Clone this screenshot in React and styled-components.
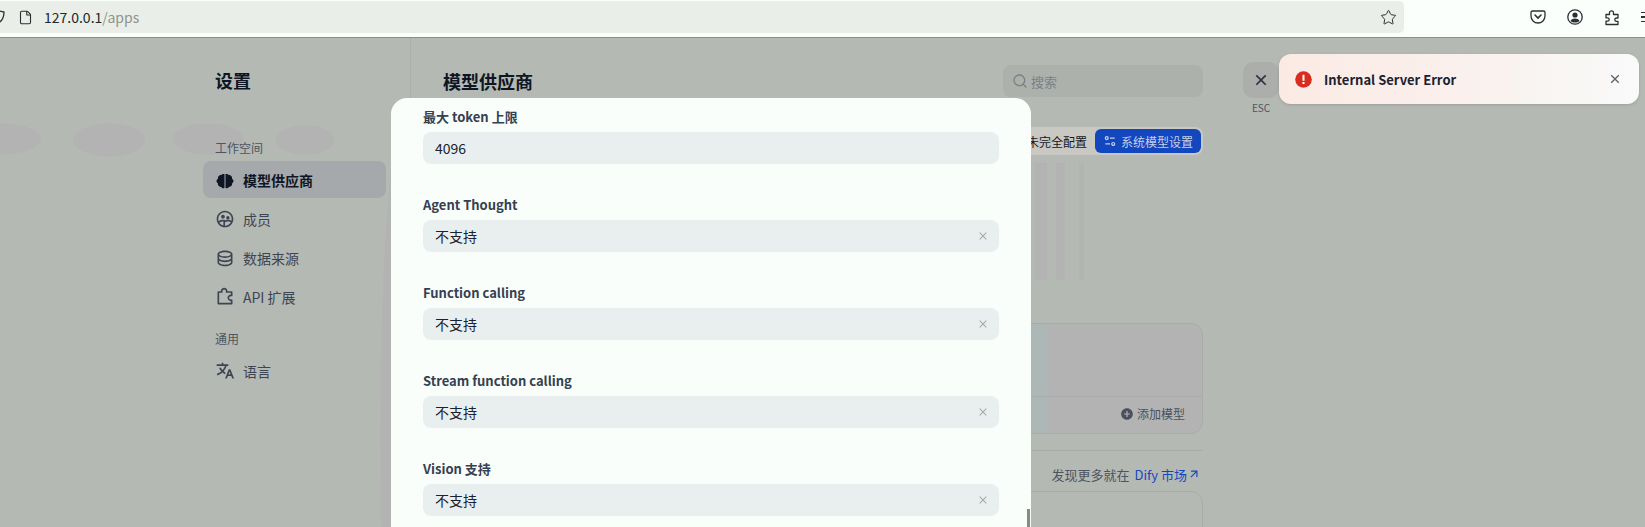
import React from "react"
import styled, { createGlobalStyle } from "styled-components"
import {
  RiAddCircleFill,
  RiArrowRightUpLine,
  RiCloseLine,
  RiDatabase2Line,
  RiEqualizer2Line,
  RiGroup2Line,
  RiPuzzle2Line,
  RiSearchLine,
  RiTranslate2,
} from "react-icons/ri"
import { File, Star } from "lucide-react"

const GlobalStyle = createGlobalStyle`
  html, body {
    margin: 0;
    padding: 0;
    overflow: hidden;
    background: #b5b9b4;
  }
  * {
    box-sizing: border-box;
  }
  body {
    font-family: "Noto Sans CJK SC", "Noto Sans", sans-serif;
  }
`

const BrainIcon = () => (
  <svg width="20" height="20" viewBox="0 0 20 20" fill="currentColor">
    <path d="M9.500 2v16c-1.300.4-2.700-.1-3.400-1.100-.8.1-1.900-.3-2.500-1.100-.7-.8-.8-1.700-.6-2.400-.9-.6-1.500-1.400-1.500-2.400s.6-1.800 1.500-2.300c-.2-.9-.1-1.800.6-2.500.6-.8 1.600-1.200 2.500-1.100.7-1 2.100-1.500 3.400-1Z" />
    <path d="M10.500 2v16c1.300.4 2.700-.1 3.400-1.100.8.1 1.900-.3 2.500-1.100.7-.8.8-1.700.6-2.400.9-.6 1.500-1.400 1.500-2.400s-.6-1.800-1.500-2.300c.2-.9.1-1.800-.6-2.500-.6-.8-1.600-1.200-2.500-1.100-.7-1-2.100-1.500-3.400-1Z" />
  </svg>
)

const navItems = [
  { label: "模型供应商", Icon: BrainIcon, active: true },
  { label: "成员", Icon: RiGroup2Line },
  { label: "数据来源", Icon: RiDatabase2Line },
  { label: "API 扩展", Icon: RiPuzzle2Line },
]

const fields = [
  { label: "Agent Thought" },
  { label: "Function calling" },
  { label: "Stream function calling" },
  { label: "Vision 支持" },
]

const App = () => {
  return (
    <Page>
      <GlobalStyle />
      <BrowserBar>
        <UrlBar>
          <Shield viewBox="0 0 16 16">
            <path d="M1 3 L8 1.500 L15 3 C15 9 12 13 8 14.500 C4 13 1 9 1 3Z" />
          </Shield>
          <File size={15} strokeWidth={1.8} color="#2c3033" />
          <UrlText>
            127.0.0.1<UrlPath>/apps</UrlPath>
          </UrlText>
          <UrlSpacer />
          <Star size={17} strokeWidth={1.4} color="#2c3033" />
        </UrlBar>
        <BrowserTools>
          <svg width="16" height="16" viewBox="0 0 16 16" fill="none" stroke="#2c3033" strokeWidth="1.3">
            <path d="M2.500 2h11A1.500 1.500 0 0 1 15 3.500V7a7 7 0 0 1-14 0V3.500A1.500 1.500 0 0 1 2.500 2Z" />
            <path d="M5 6l3 3 3-3" strokeWidth="1.600" strokeLinecap="round" />
          </svg>
          <svg width="16" height="16" viewBox="0 0 16 16" fill="#2c3033">
            <circle cx="8" cy="8" r="7.200" fill="none" stroke="#2c3033" strokeWidth="1.300" />
            <circle cx="8" cy="6" r="2.600" />
            <path d="M3.500 12c1-2 2.600-2.600 4.500-2.600s3.500.6 4.500 2.600c-1.200 1-2.800 1.600-4.500 1.600s-3.300-.6-4.500-1.600Z" />
          </svg>
          <svg width="16" height="17" viewBox="0 0 16 16" fill="none" stroke="#2c3033" strokeWidth="1.300" strokeLinejoin="round">
            <path d="M2 5h3.500V3.300a2 2 0 0 1 4 0V5H14v3.500h-1.500a1.700 1.700 0 0 0 0 3.400H14V15H2v-3.300h1.500a1.700 1.700 0 0 0 0-3.400H2z" />
          </svg>
          <Burger>
            <span />
            <span />
            <span />
          </Burger>
        </BrowserTools>
      </BrowserBar>

      <Main>
        <Sidebar>
          <SideTitle>设置</SideTitle>
          <GroupLabel>工作空间</GroupLabel>
          <NavList>
            {navItems.map(({ label, Icon, active }) => (
              <NavItem key={label} $active={active}>
                <Icon size={20} />
                {label}
              </NavItem>
            ))}
          </NavList>
          <GroupLabel $second>通用</GroupLabel>
          <NavItem>
            <RiTranslate2 size={20} />
            语言
          </NavItem>
        </Sidebar>

        <Content>
          <HeaderRow>
            <Heading>模型供应商</Heading>
            <Search>
              <RiSearchLine size={16} />
              搜索
            </Search>
          </HeaderRow>
          <ToolRow>
            <ToolWrap>
              未完全配置
              <BlueButton>
                <RiEqualizer2Line size={14} />
                系统模型设置
              </BlueButton>
            </ToolWrap>
          </ToolRow>
          <StripeArea />
          <ProviderCard>
            <CardBody />
            <CardFoot>
              <AddModel>
                <RiAddCircleFill size={14} />
                添加模型
              </AddModel>
            </CardFoot>
          </ProviderCard>
          <Rule />
          <MarketRow>
            发现更多就在
            <MarketLink>
              Dify 市场
              <RiArrowRightUpLine size={14} />
            </MarketLink>
          </MarketRow>
          <NextCard />
        </Content>

        <CloseColumn>
          <CloseButton>
            <RiCloseLine size={20} />
          </CloseButton>
          <EscText>ESC</EscText>
        </CloseColumn>
      </Main>

      <Modal>
        <Field>
          <FieldLabel>最大 token 上限</FieldLabel>
          <InputBox>4096</InputBox>
        </Field>
        {fields.map(field => (
          <Field key={field.label}>
            <FieldLabel>{field.label}</FieldLabel>
            <InputBox>
              不支持
              <ClearIcon>
                <RiCloseLine size={14} />
              </ClearIcon>
            </InputBox>
          </Field>
        ))}
        <ScrollThumb />
      </Modal>

      <Toast>
        <ToastIcon viewBox="0 0 17 17">
          <circle cx="8.500" cy="8.500" r="8.300" fill="#d92d20" />
          <rect x="7.500" y="3.800" width="2" height="6" fill="#fff" />
          <rect x="7.500" y="11" width="2" height="2" fill="#fff" />
        </ToastIcon>
        <ToastText>Internal Server Error</ToastText>
        <ToastClose>
          <RiCloseLine size={16} />
        </ToastClose>
      </Toast>
    </Page>
  )
}

const Page = styled.div`
  position: relative;
  display: flex;
  flex-direction: column;
  width: 1645px;
  height: 527px;
  overflow: hidden;
  background: #b5b9b4;
`

const BrowserBar = styled.div`
  display: flex;
  align-items: flex-start;
  flex-shrink: 0;
  height: 38px;
  padding-top: 1px;
  background: #fbfffb;
  border-bottom: 1px solid #8b8f8b;
`

const Shield = styled.svg`
  width: 16px;
  height: 16px;
  margin-left: -11px;
  margin-right: 13px;
  flex-shrink: 0;
  fill: none;
  stroke: #2c3033;
  stroke-width: 1.3;
`

const UrlBar = styled.div`
  display: flex;
  align-items: center;
  flex-shrink: 0;
  width: 1404px;
  height: 32px;
  padding-right: 7px;
  background: #e9efe8;
  border-radius: 0 5px 5px 0;
`

const UrlText = styled.span`
  margin-left: 11px;
  font-size: 14px;
  color: #23272a;
`

const UrlPath = styled.span`
  color: #8f9490;
`

const UrlSpacer = styled.div`
  flex: 1;
`

const BrowserTools = styled.div`
  display: flex;
  align-items: center;
  flex-shrink: 0;
  gap: 21px;
  height: 32px;
  margin-left: 126px;
`

const Burger = styled.div`
  display: flex;
  flex-direction: column;
  gap: 3px;
  width: 16px;
  flex-shrink: 0;

  span {
    height: 1.5px;
    background: #2c3033;
  }
`

const Main = styled.div`
  display: flex;
  flex: 1;
  min-height: 0;
  background-color: #b5b9b4;
  background-image:
    radial-gradient(ellipse 42px 16px at 0px 101px, #b4b3b3 96%, transparent),
    radial-gradient(ellipse 37px 17px at 109px 102px, #b4b3b3 96%, transparent),
    radial-gradient(ellipse 36px 16px at 208px 101px, #b4b3b3 96%, transparent),
    radial-gradient(ellipse 30px 15px at 305px 102px, #b4b3b3 96%, transparent),
    radial-gradient(ellipse 22px 320px at 402px 400px, #b4b3b3 96%, transparent);
  background-position: 0 0;
  background-repeat: no-repeat;
`

const Sidebar = styled.aside`
  width: 411px;
  flex-shrink: 0;
  padding: 28px 24px 0 203px;
  border-right: 1px solid #abafaa;
`

const SideTitle = styled.div`
  padding-left: 12px;
  font-size: 18px;
  line-height: 28px;
  font-weight: 700;
  color: #0f1623;
`

const GroupLabel = styled.div`
  margin-top: ${props => (props.$second ? "15px" : "45px")};
  margin-bottom: 4px;
  padding-left: 12px;
  font-size: 12px;
  line-height: 18px;
  color: #4d5562;
`

const NavList = styled.div`
  display: flex;
  flex-direction: column;
  gap: 2px;
`

const NavItem = styled.div`
  display: flex;
  align-items: center;
  gap: 8px;
  height: 37px;
  padding-left: 12px;
  border-radius: 8px;
  font-size: 14px;
  font-weight: ${props => (props.$active ? 700 : 400)};
  color: ${props => (props.$active ? "#0f1623" : "#3e4552")};
  background: ${props => (props.$active ? "#a6a9ac" : "transparent")};
`

const Content = styled.section`
  width: 792px;
  flex-shrink: 0;
  padding: 27px 0 0 32px;
`

const HeaderRow = styled.div`
  display: flex;
  align-items: center;
  justify-content: space-between;
  height: 32px;
`

const Heading = styled.h1`
  margin: 0;
  font-size: 18px;
  line-height: 28px;
  font-weight: 700;
  color: #0f1623;
`

const Search = styled.div`
  display: flex;
  align-items: center;
  gap: 3px;
  width: 200px;
  height: 32px;
  padding-left: 9px;
  border-radius: 8px;
  background: #adb1ac;
  font-size: 13px;
  color: #7b8087;
`

const ToolRow = styled.div`
  display: flex;
  justify-content: flex-end;
  margin-top: 30px;
`

const ToolWrap = styled.div`
  display: flex;
  align-items: center;
  justify-content: flex-end;
  gap: 8px;
  width: 240px;
  height: 28px;
  padding: 0 2px 0 0;
  border-radius: 8px;
  background: #c9c8c2;
  font-size: 12px;
  color: #14181f;
`

const BlueButton = styled.div`
  display: flex;
  align-items: center;
  gap: 4px;
  width: 106px;
  height: 24px;
  padding-left: 8px;
  border-radius: 6px;
  background: #1347c0;
  font-size: 12px;
  color: #c5d0e8;
`

const StripeArea = styled.div`
  height: 117px;
  margin-top: 8px;
  background-image:
    linear-gradient(#b4b3b3, #b4b3b3),
    linear-gradient(#b4b3b3, #b4b3b3),
    linear-gradient(#b4b3b3, #b4b3b3);
  background-size: 12px 100%, 9px 100%, 5px 100%;
  background-position: 592px 0, 613px 0, 636px 0;
  background-repeat: no-repeat;
`

const ProviderCard = styled.div`
  display: flex;
  flex-direction: column;
  height: 111px;
  margin-top: 43px;
  border: 1px solid #a9acaa;
  border-radius: 12px;
  background: linear-gradient(90deg, #b4b3b3 587px, #adb7b5 587px, #adb7b5 603px, #b4b3b3 603px);
`

const CardBody = styled.div`
  flex: 1;
`

const CardFoot = styled.div`
  display: flex;
  align-items: center;
  justify-content: flex-end;
  height: 37px;
  padding: 0 17px 3px 0;
  border-top: 1px solid #a9acaa;
`

const AddModel = styled.div`
  display: flex;
  align-items: center;
  gap: 3px;
  font-size: 12px;
  color: #4a515d;
`

const Rule = styled.div`
  height: 1px;
  margin-top: 16px;
  background: #a9acaa;
`

const MarketRow = styled.div`
  display: flex;
  align-items: center;
  justify-content: flex-end;
  gap: 5px;
  height: 20px;
  margin-top: 13px;
  padding-right: 2px;
  font-size: 13px;
  color: #4d5562;
`

const MarketLink = styled.span`
  display: flex;
  align-items: center;
  color: #1347c0;
`

const NextCard = styled.div`
  height: 60px;
  margin-top: 7px;
  border: 1px solid #a9acaa;
  border-radius: 12px;
`

const CloseColumn = styled.div`
  display: flex;
  flex-direction: column;
  align-items: center;
  margin: 24px 0 0 40px;
`

const CloseButton = styled.div`
  display: flex;
  align-items: center;
  justify-content: center;
  width: 36px;
  height: 36px;
  border-radius: 10px;
  background: #abaeaa;
  color: #2c3442;
`

const EscText = styled.div`
  margin-top: 2px;
  font-size: 10px;
  line-height: 16px;
  color: #4d5562;
`

const Modal = styled.div`
  position: absolute;
  left: 391px;
  top: 98px;
  display: flex;
  flex-direction: column;
  gap: 31px;
  width: 640px;
  height: 460px;
  padding: 9px 32px 0;
  border-radius: 16px;
  background: #f9fefa;
`

const Field = styled.div`
  display: flex;
  flex-direction: column;
  gap: 5px;
`

const FieldLabel = styled.label`
  font-size: 13px;
  line-height: 20px;
  font-weight: 700;
  color: #354052;
`

const InputBox = styled.div`
  display: flex;
  align-items: center;
  justify-content: space-between;
  height: 32px;
  padding: 0 9px 0 12px;
  border-radius: 8px;
  background: #e9efef;
  font-size: 14px;
  color: #1a2230;
`

const ClearIcon = styled.span`
  display: flex;
  color: #a8acac;
`

const ScrollThumb = styled.div`
  position: absolute;
  left: 636px;
  top: 411px;
  width: 3px;
  height: 20px;
  background: #8a8a80;
`

const Toast = styled.div`
  position: absolute;
  left: 1279px;
  top: 54px;
  display: flex;
  align-items: center;
  width: 360px;
  height: 50px;
  padding: 0 16px;
  border-radius: 12px;
  background: linear-gradient(90deg, #fbeae4 0%, #faf0ed 50%, #f8f6f3 80%, #fafafb 100%);
  box-shadow: 0 1px 3px rgba(60, 60, 60, 0.2);
`

const ToastIcon = styled.svg`
  width: 17px;
  height: 17px;
  margin-right: 12px;
  flex-shrink: 0;
`

const ToastText = styled.span`
  flex: 1;
  font-size: 13px;
  font-weight: 700;
  color: #1a2230;
`

const ToastClose = styled.span`
  display: flex;
  color: #5a6272;
`

export default App
